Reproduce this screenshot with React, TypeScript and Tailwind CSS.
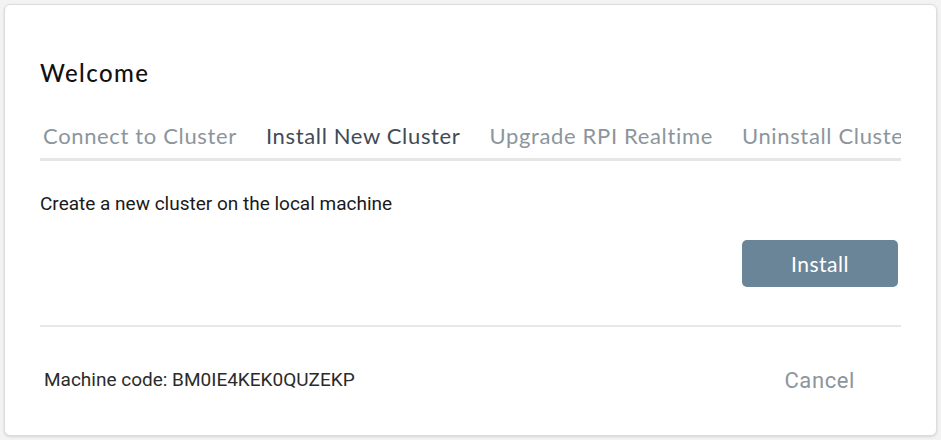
const tabs = [
  { label: "Connect to Cluster", active: false },
  { label: "Install New Cluster", active: true },
  { label: "Upgrade RPI Realtime", active: false },
  { label: "Uninstall Cluster", active: false },
];

const heading = { fontFamily: "Lato, 'Open Sans', sans-serif" };
const body = { fontFamily: "Roboto, 'Liberation Sans', sans-serif" };

export default function App() {
  return (
    <div className="w-[941px] h-[440px] bg-[#f3f3f3] p-1">
      <div className="h-full rounded-md border border-[#dcdcdc] bg-white px-[35px] pt-[54px] shadow-sm">
        <h1
          className="text-[24px] font-medium leading-7 tracking-[1.4px] text-[#111]"
          style={heading}
        >
          Welcome
        </h1>

        <div className="mt-[34px] overflow-hidden border-b-[3px] border-[#e6e6e6]">
          <div className="flex gap-[29px] whitespace-nowrap pl-[3px] pb-[7px]">
            {tabs.map((t) => (
              <span
                key={t.label}
                className={
                  "text-[22px] leading-[30px] tracking-[0.65px] " +
                  (t.active ? "text-[#414b56]" : "text-[#8d959c]")
                }
                style={heading}
              >
                {t.label}
              </span>
            ))}
          </div>
        </div>

        <p className="mt-[33px] text-[19px] leading-5 text-[#1a1a1a]" style={body}>
          Create a new cluster on the local machine
        </p>

        <div className="mt-[26px] flex justify-end pr-[3px]">
          <button
            className="h-[47px] w-[156px] rounded-[5px] bg-[#6a8597] text-[21px] tracking-[0.5px] text-white"
            style={heading}
          >
            Install
          </button>
        </div>

        <div className="mt-[38px] h-[2px] bg-[#e8e8e8]" />

        <div className="mt-[37px] flex items-center justify-between pl-[4px] pr-[46px]">
          <span className="text-[19px] text-[#2b2b2b]" style={body}>
            Machine code: BM0IE4KEK0QUZEKP
          </span>
          <button className="text-[22px] tracking-[0.6px] text-[#8d959c]" style={body}>
            Cancel
          </button>
        </div>
      </div>
    </div>
  );
}
